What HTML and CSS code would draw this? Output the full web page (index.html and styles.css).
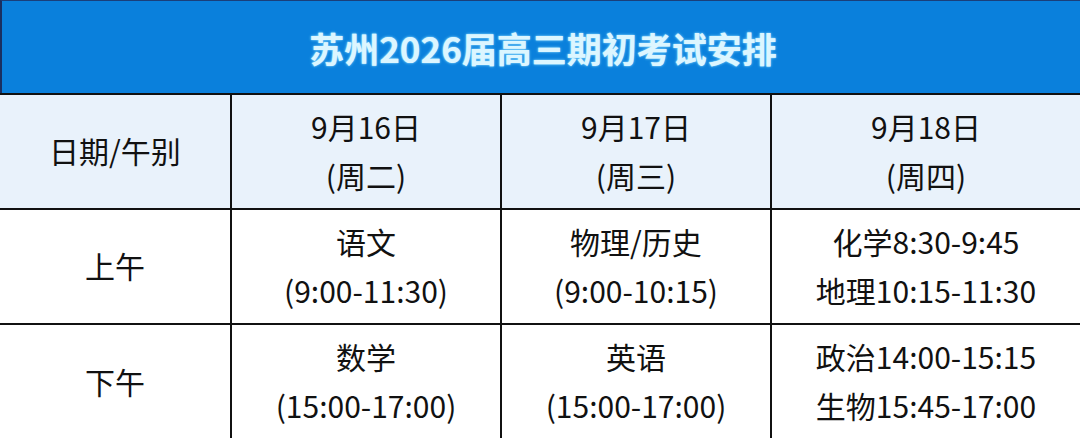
FILE: index.html
```html
<!DOCTYPE html>
<html lang="zh">
<head>
<meta charset="utf-8">
<link rel="stylesheet" href="styles.css">
</head>
<body>
<div class="sheet">
  <div class="title">苏州2026届高三期初考试安排</div>
  <div class="grid">
    <div class="cell head">日期/午别</div>
    <div class="cell head"><span>9月16日</span><span>(周二)</span></div>
    <div class="cell head"><span>9月17日</span><span>(周三)</span></div>
    <div class="cell head"><span>9月18日</span><span>(周四)</span></div>

    <div class="cell">上午</div>
    <div class="cell"><span>语文</span><span>(9:00-11:30)</span></div>
    <div class="cell"><span>物理/历史</span><span>(9:00-10:15)</span></div>
    <div class="cell"><span>化学8:30-9:45</span><span>地理10:15-11:30</span></div>

    <div class="cell">下午</div>
    <div class="cell"><span>数学</span><span>(15:00-17:00)</span></div>
    <div class="cell"><span>英语</span><span>(15:00-17:00)</span></div>
    <div class="cell"><span>政治14:00-15:15</span><span>生物15:45-17:00</span></div>
  </div>
</div>
</body>
</html>
```

FILE: styles.css
```css
html, body {
  margin: 0;
  padding: 0;
  background: #ffffff;
}

.sheet {
  width: 1080px;
  height: 438px;
  overflow: hidden;
  font-family: "Noto Sans CJK SC", "Noto Sans", sans-serif;
  color: #111111;
}

.title {
  height: 93px;
  box-sizing: border-box;
  background: #0a80dc;
  border-top: 1px solid #1a3f7a;
  border-left: 2px solid #1a2f60;
  display: flex;
  align-items: center;
  justify-content: center;
  font-size: 35px;
  font-weight: 700;
  color: #dcf6ff;
  text-shadow: 0 0 3px #7fd4ff, 0 0 1px #aee6ff;
  padding-left: 4px;
}

.grid {
  display: grid;
  grid-template-columns: 230px 268px 268px 1fr;
  grid-template-rows: 113px 113px 114px;
  gap: 2px;
  background: #111111;
  padding-top: 2px;
}

.cell {
  background: #ffffff;
  display: flex;
  flex-direction: column;
  align-items: center;
  justify-content: center;
  font-size: 30px;
  line-height: 49px;
  padding-bottom: 2px;
  box-sizing: border-box;
}

.cell.head {
  background: #e9f2fb;
}
```
